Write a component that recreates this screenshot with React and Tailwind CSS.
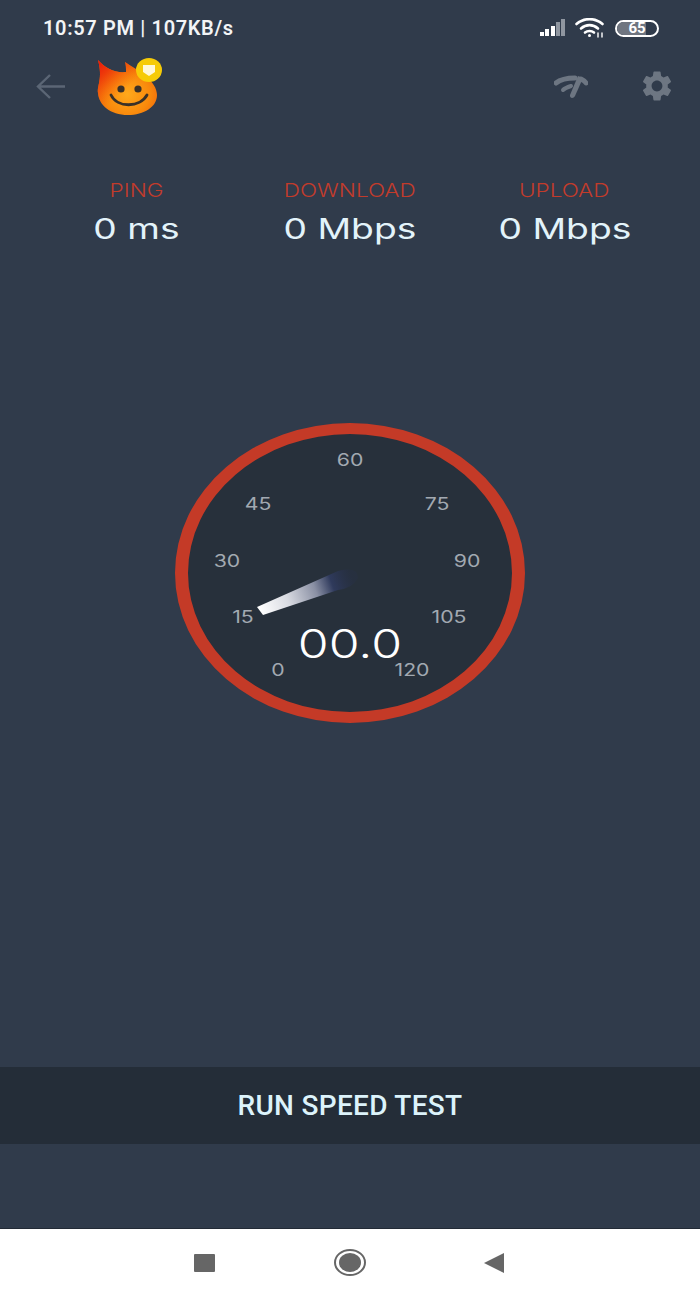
import { MdSettings } from "react-icons/md";

const dialLabels = [
  { text: "0", pos: "left-[90px] top-[226px]" },
  { text: "15", pos: "left-[55px] top-[173px]" },
  { text: "30", pos: "left-[39px] top-[117px]" },
  { text: "45", pos: "left-[70px] top-[60px]" },
  { text: "60", pos: "left-[162px] top-[16px]" },
  { text: "75", pos: "left-[249px] top-[60px]" },
  { text: "90", pos: "left-[279px] top-[117px]" },
  { text: "105", pos: "left-[261px] top-[173px]" },
  { text: "120", pos: "left-[224px] top-[226px]" },
];

const stats = [
  { label: "PING", value: "0 ms", center: "w-[217px]" },
  { label: "DOWNLOAD", value: "0 Mbps", center: "w-[209px]" },
  { label: "UPLOAD", value: "0 Mbps", center: "w-[221px]" },
];

const flamePath =
  "M1 5 C8 13 17 18 29 17 C29 13 29 10 28 7 C35 12 42 15 46 19 C56 26 60 34 60 40 C60 52 47 60 31 60 C13 60 2 50 1 38 C0 30 6 24 1 5 Z";

const Logo = () => (
  <svg width="66" height="60" viewBox="0 0 66 60" className="ml-[32px] mb-[2px]">
    <defs>
      <radialGradient id="face" cx="0.5" cy="0.62" r="0.68">
        <stop offset="0" stopColor="#ffa91c" />
        <stop offset="0.55" stopColor="#f98a0c" />
        <stop offset="1" stopColor="#ec5a0a" />
      </radialGradient>
      <linearGradient id="flame" x1="0" y1="0" x2="0.5" y2="0.5">
        <stop offset="0" stopColor="#e8140a" />
        <stop offset="0.35" stopColor="#ee3a0a" />
        <stop offset="1" stopColor="#f5600a" stopOpacity="0" />
      </linearGradient>
    </defs>
    <path d={flamePath} fill="url(#face)" />
    <path d={flamePath} fill="url(#flame)" />
    <circle cx="24" cy="34" r="3.6" fill="#3a3128" />
    <circle cx="41" cy="34" r="3.6" fill="#3a3128" />
    <path d="M14 40 C20 53 43 53 50 40" fill="none" stroke="#3a3128" strokeWidth="2.8" strokeLinecap="round" />
    <ellipse cx="52" cy="15" rx="13" ry="12" fill="#f6cb07" />
    <path d="M46 10 H58 V17 L52 21 L46 17 Z" fill="#fff8d8" />
  </svg>
);

const SlowWifi = () => (
  <svg width="34" height="26" viewBox="0 0 34 26" fill="none" stroke="#6d7682" strokeLinecap="round">
    <path d="M2 10 C7 6 14 5 21 5" strokeWidth="5" />
    <path d="M27 6 C29 7 31 8 32 10" strokeWidth="5" />
    <path d="M9 17 C11 15 14 14 17 13" strokeWidth="4" />
    <path d="M24 3 L29 5 L21 23 C19.5 26 15.5 25.5 16 22 Z" fill="#6d7682" stroke="none" />
  </svg>
);

const App = () => (
  <div className="w-[700px] h-[1300px] flex flex-col bg-[#303b4b] font-['Inter',sans-serif] overflow-hidden">
    {/* status bar */}
    <div className="h-[56px] pt-[17px] pl-[43px] pr-[41px] flex justify-between items-start">
      <span className="font-['Roboto',sans-serif] font-semibold text-[20px] leading-[22px] tracking-[0.65px] text-[#f2f4f6]">
        10:57 PM | 107KB/s
      </span>
      <div className="flex items-center gap-[10px] h-[22px]">
        <svg width="25" height="18" viewBox="0 0 25 18">
          <rect x="0" y="13" width="4" height="4" fill="#fff" />
          <rect x="5" y="10" width="4" height="7" fill="#fff" />
          <rect x="11" y="7" width="4" height="10" fill="#fff" />
          <rect x="16" y="3" width="4" height="14" fill="#8f96a0" />
          <rect x="21" y="0" width="4" height="17" fill="#8f96a0" />
        </svg>
        <svg width="30" height="20" viewBox="0 0 30 20" fill="none" stroke="#fff" strokeWidth="2.6" strokeLinecap="round">
          <path d="M1.5 6 C9 -0.5 20 -0.5 27.5 6" />
          <path d="M6 10.5 C11 6 18 6 23 10.5" />
          <path d="M10 14.5 C12.5 12.5 16.5 12.5 19 14.5" />
          <circle cx="14.5" cy="17.5" r="1.5" fill="#fff" stroke="none" />
          <path d="M23 15 V19 M27 15 V19" strokeWidth="1.4" />
        </svg>
        <div className="relative w-[44px] h-[17px] rounded-full border-2 border-white overflow-hidden flex items-center justify-center">
          <div className="absolute left-0 inset-y-0 w-[29px] bg-[#6f7580]" />
          <span className="relative font-['Roboto',sans-serif] font-bold text-[15px] leading-none text-white">65</span>
        </div>
      </div>
    </div>

    {/* toolbar */}
    <div className="h-[60px] pl-[36px] pr-[25px] flex items-center">
      <svg width="29" height="25" viewBox="0 0 29 25" fill="none" stroke="#5b6675" strokeWidth="2.4">
        <path d="M29 12.5 H2 M14 1 L2 12.5 L14 24" />
      </svg>
      <Logo />
      <div className="ml-auto flex items-center gap-[51px]">
        <SlowWifi />
        <MdSettings size={36} color="#6d7682" />
      </div>
    </div>

    {/* stats */}
    <div className="mt-[63px] pl-[28px] flex">
      {stats.map((stat) => (
        <div key={stat.label} className={`${stat.center} flex flex-col items-center`}>
          <span className="text-[18px] leading-[24px] font-light text-[#c23b2b] scale-x-[1.25]">{stat.label}</span>
          <span className="mt-[8px] text-[28px] leading-[36px] font-normal text-[#e3f3fa] scale-x-[1.33]">{stat.value}</span>
        </div>
      ))}
    </div>

    {/* gauge */}
    <div className="mt-[176px] flex justify-center">
      <div className="relative w-[350px] h-[300px] rounded-[50%] border-x-[13px] border-y-[11px] border-[#c43a27] bg-[#27303b]">
        {dialLabels.map((label) => (
          <span
            key={label.text}
            className={`absolute ${label.pos} -translate-x-1/2 text-[17px] leading-[20px] text-[#a2a9b1] scale-x-[1.25]`}
          >
            {label.text}
          </span>
        ))}
        <svg width="110" height="70" viewBox="0 0 110 70" className="absolute left-[65px] top-[124px]">
          <defs>
            <linearGradient id="needle" gradientUnits="userSpaceOnUse" x1="7" y1="53" x2="100" y2="20">
              <stop offset="0" stopColor="#ffffff" />
              <stop offset="0.3" stopColor="#d9dbe2" />
              <stop offset="0.6" stopColor="#8a90a4" />
              <stop offset="0.78" stopColor="#2f3a5c" />
              <stop offset="1" stopColor="#27304a" stopOpacity="0.3" />
            </linearGradient>
          </defs>
          <path d="M4 49 L85 13 Q105 8 105 20 Q100 30 85 32 L10 57 Z" fill="url(#needle)" />
        </svg>
        <span className="absolute inset-x-0 top-[187px] text-center text-[40px] leading-[46px] font-light text-white scale-x-[1.25]">
          00.0
        </span>
      </div>
    </div>

    {/* run button */}
    <div className="mt-[344px] h-[77px] flex items-center justify-center bg-[#242d38]">
      <span className="font-['Roboto',sans-serif] font-medium text-[28px] tracking-[0.3px] text-[#dcf3fb]">RUN SPEED TEST</span>
    </div>

    {/* android nav */}
    <div className="mt-[84px] h-[72px] bg-white border-t border-[#222a35] flex items-center justify-center pr-[2px] pb-[4px]">
      <div className="w-[21px] h-[18px] rounded-[1px] bg-[#666666]" />
      <div className="ml-[119px] w-[32px] h-[27px] rounded-[50%] border-2 border-[#666666] flex items-center justify-center">
        <div className="w-[22px] h-[19px] rounded-[50%] bg-[#666666]" />
      </div>
      <svg width="20" height="20" viewBox="0 0 20 20" className="ml-[118px]">
        <path d="M0 10 L20 0 V20 Z" fill="#666666" />
      </svg>
    </div>
  </div>
);

export default App;
